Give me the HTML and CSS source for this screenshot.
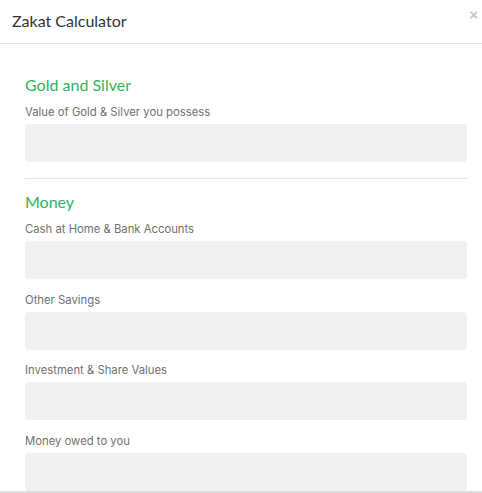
FILE: index.html
```html
<!DOCTYPE html>
<html lang="en">
<head>
<meta charset="utf-8">
<title>Zakat Calculator</title>
<link rel="stylesheet" href="styles.css">
</head>
<body>
<div class="modal">
  <div class="modal-header">
    <h4 class="modal-title">Zakat Calculator</h4>
    <button class="close" type="button" aria-label="Close">×</button>
  </div>
  <div class="modal-body">
    <h5 class="section-title">Gold and Silver</h5>
    <div class="form-group">
      <label class="field-label">Value of Gold &amp; Silver you possess</label>
      <input class="field-input" type="text">
    </div>
    <hr class="divider">
    <h5 class="section-title">Money</h5>
    <div class="form-group">
      <label class="field-label">Cash at Home &amp; Bank Accounts</label>
      <input class="field-input" type="text">
    </div>
    <div class="form-group">
      <label class="field-label">Other Savings</label>
      <input class="field-input" type="text">
    </div>
    <div class="form-group">
      <label class="field-label">Investment &amp; Share Values</label>
      <input class="field-input" type="text">
    </div>
    <div class="form-group">
      <label class="field-label">Money owed to you</label>
      <input class="field-input" type="text">
    </div>
  </div>
</div>
</body>
</html>
```
FILE: styles.css
```css
html, body {
  margin: 0;
  padding: 0;
  background: #fff;
}
body {
  font-family: Inter, "Noto Sans", sans-serif;
  width: 482px;
  height: 493px;
  overflow: hidden;
}
.modal {
  height: 491px;
  border-bottom: 2px solid #dedede;
  overflow: hidden;
}
.modal-header {
  display: flex;
  align-items: flex-start;
  justify-content: space-between;
  height: 44px;
  box-sizing: border-box;
  border-bottom: 1px solid #e2e2e2;
  padding: 0 0 0 12px;
}
.modal-title {
  margin: 0;
  font-family: Lato, Inter, sans-serif;
  font-size: 16px;
  font-weight: 400;
  line-height: 20px;
  padding-top: 11px;
  color: #333;
}
.close {
  border: 0;
  background: none;
  padding: 0;
  margin: 6px 4px 0 0;
  font-family: Arial, "Liberation Sans", sans-serif;
  font-size: 15px;
  font-weight: 700;
  line-height: 18px;
  color: #c4c4c4;
  cursor: pointer;
}
.modal-body {
  padding: 30px 15px 0 25px;
}
.section-title {
  margin: 0 0 8px;
  font-family: Lato, Inter, sans-serif;
  font-size: 16px;
  font-weight: 400;
  line-height: 22px;
  color: #2fb35f;
}
.form-group {
  display: flex;
  flex-direction: column;
  margin-bottom: 12.5px;
}
.field-label {
  font-size: 11.3px;
  line-height: 17px;
  color: #707070;
  margin-bottom: 3px;
}
.field-input {
  height: 38px;
  box-sizing: border-box;
  border: 0;
  border-radius: 4px;
  background: #f0f0f0;
  width: 100%;
  margin: 0;
}
.divider {
  border: 0;
  border-top: 1px solid #e2e2e2;
  margin: 16px 0 12px;
}
```
